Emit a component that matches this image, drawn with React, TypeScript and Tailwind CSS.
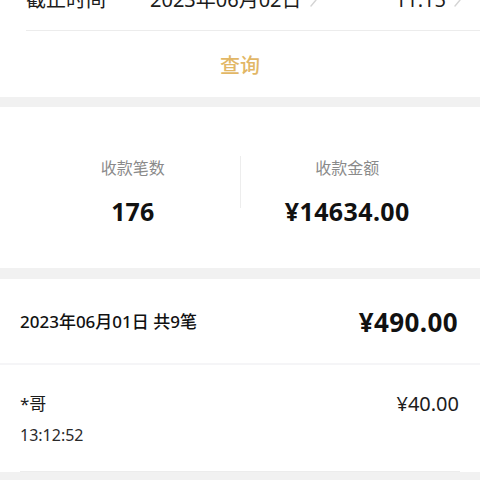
import React from "react";

const Chevron = () => (
  <svg width="9" height="14" viewBox="0 0 9 14" className="ml-[7px]">
    <path d="M2 1l5 6-5 6" fill="none" stroke="#d4d4d4" strokeWidth="1.4" strokeLinecap="round" strokeLinejoin="round" />
  </svg>
);

export default function App() {
  return (
    <div
      className="w-[480px] h-[480px] overflow-hidden bg-[#f1f1f1]"
      style={{ fontFamily: '"Noto Sans", "Noto Sans CJK SC", sans-serif' }}
    >
      <div className="bg-white">
        <div className="ml-[26px] -mt-[31px] h-[62px] flex items-center border-b border-[#ececec] text-[20px] text-[#1c1c1c]">
          <span className="w-[124px]">截止时间</span>
          <span className="flex items-center">2023年06月02日<Chevron /></span>
          <span className="ml-auto mr-[18px] flex items-center">11:15<Chevron /></span>
        </div>
        <div className="h-[66px] flex items-center justify-center pt-[3px] text-[20px] font-medium text-[#e2b766]">
          查询
        </div>
      </div>
      <div className="h-[10px]" />
      <div className="bg-white h-[161px] flex items-center px-[26px] pt-[4px]">
        <div className="flex-1 flex flex-col items-center">
          <span className="text-[16px] text-[#8a8a8a] leading-[22px]">收款笔数</span>
          <span className="mt-[21px] text-[25px] font-bold text-[#111] leading-[22px]">176</span>
        </div>
        <div className="w-px h-[52px] bg-[#ededed] -mt-[16px]" />
        <div className="flex-1 flex flex-col items-center">
          <span className="text-[16px] text-[#8a8a8a] leading-[22px]">收款金额</span>
          <span className="mt-[21px] text-[25px] font-bold text-[#111] leading-[22px] tracking-[0.4px]">¥14634.00</span>
        </div>
      </div>
      <div className="h-[11px]" />
      <div className="bg-white">
        <div className="h-[86px] flex items-center justify-between px-[20px] pt-[2px] border-b-[2px] border-[#f5f5f7]">
          <span className="text-[17px] font-medium text-[#111]">2023年06月01日 共9笔</span>
          <span className="text-[26px] font-bold text-[#111] tracking-[0.4px] mr-[2px]">¥490.00</span>
        </div>
        <div className="mx-[20px] h-[107px] border-b border-[#ececec] flex flex-col pt-[27px]">
          <div className="flex items-center justify-between h-[24px]">
            <span className="text-[17px] text-[#1c1c1c]">*哥</span>
            <span className="text-[20px] text-[#1c1c1c] mr-[1px]">¥40.00</span>
          </div>
          <span className="mt-[7px] text-[16px] text-[#2a2a2a] leading-[24px]">13:12:52</span>
        </div>
      </div>
    </div>
  );
}
